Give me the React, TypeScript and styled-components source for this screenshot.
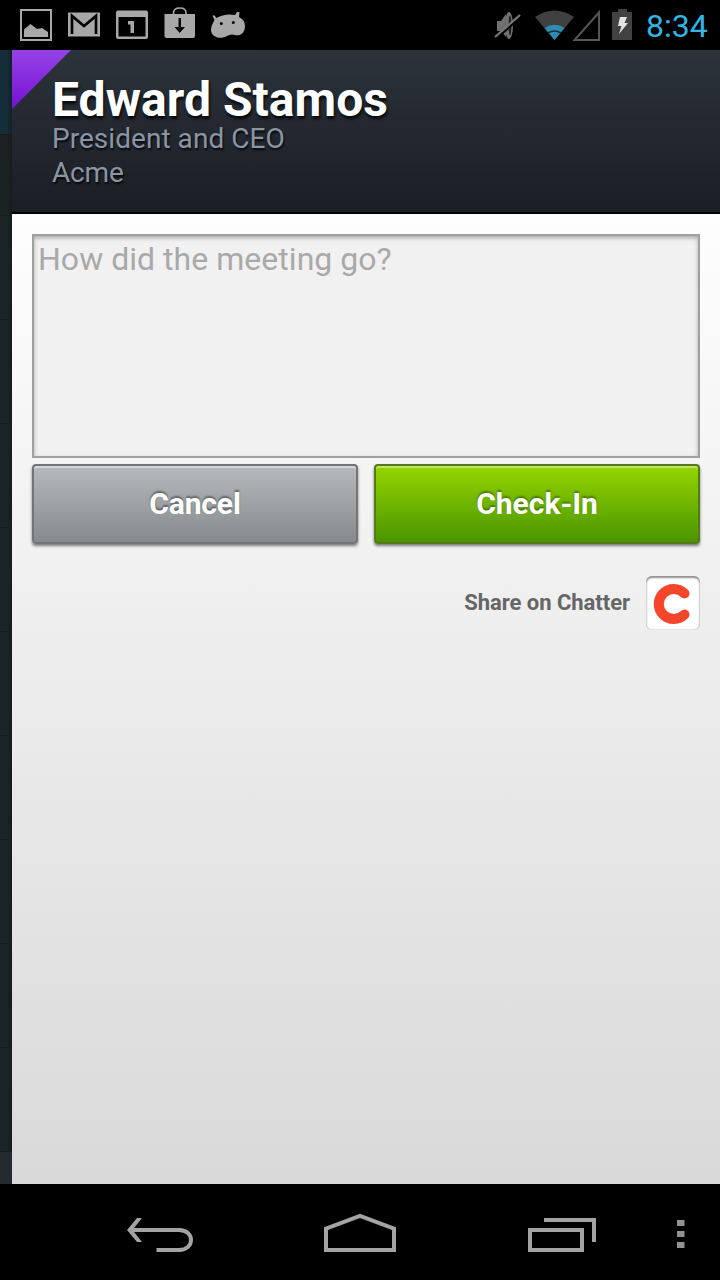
import React from "react";
import styled, { createGlobalStyle } from "styled-components";

const GlobalStyle = createGlobalStyle`
  * { box-sizing: border-box; }
  html, body { margin: 0; background: #000; }
  body { font-family: Roboto, "Liberation Sans", sans-serif; }
`;

const Screen = styled.div`
  width: 720px;
  height: 1280px;
  display: flex;
  flex-direction: column;
  background: #000;
  overflow: hidden;
`;

const StatusBar = styled.header`
  height: 50px;
  flex: none;
  display: flex;
  justify-content: space-between;
`;

const StatusRight = styled.div`
  display: flex;
`;

const Clock = styled.span`
  width: 74px;
  color: #33b5e5;
  font-size: 32px;
  line-height: 52px;
  white-space: nowrap;
`;

const Body = styled.div`
  height: 1134px;
  flex: none;
  display: flex;
`;

const Backdrop = styled.div`
  width: 12px;
  display: flex;
  flex-direction: column;
  background: #232a2d;
`;

const BackdropRow = styled.div<{ $height: number; $tone?: string }>`
  height: ${(p) => p.$height}px;
  flex: none;
  background: linear-gradient(90deg, transparent 60%, rgba(14, 20, 20, 0.5)), ${(p) => p.$tone ?? "#1b2426"};
  border-bottom: 1px solid #161d1e;
`;

const Panel = styled.main`
  width: 708px;
  display: flex;
  flex-direction: column;
`;

const ContactHeader = styled.section`
  position: relative;
  height: 164px;
  flex: none;
  padding: 28px 40px 0;
  background: linear-gradient(#2b333b, #22262e 58%, #1b1e23);
  border-bottom: 2px solid #000;
`;

const Ribbon = styled.svg`
  position: absolute;
  left: 0;
  top: 0;
`;

const Name = styled.h1`
  margin: 0;
  color: #fff;
  font-size: 48px;
  line-height: 44px;
  font-weight: 700;
  letter-spacing: 0.05px;
  text-shadow: 1px 3px 3px rgba(0, 0, 0, 0.8);
`;

const Detail = styled.p<{ $spacing?: number }>`
  margin: 0;
  color: #8b95a5;
  font-size: 28px;
  line-height: 34px;
  letter-spacing: ${(p) => p.$spacing ?? 0}px;
  text-shadow: 1px 2px 2px rgba(0, 0, 0, 0.8);
`;

const Content = styled.section`
  flex: 1;
  display: flex;
  flex-direction: column;
  padding: 20px 20px 0;
  background: linear-gradient(#fefefe, #f2f2f2 32%, #d9d9d9);
`;

const Notes = styled.textarea`
  display: block;
  width: 668px;
  height: 224px;
  flex: none;
  resize: none;
  margin: 0;
  padding: 4px 4px;
  border: 2px solid #a0a0a0;
  border-radius: 0;
  outline: 0;
  background: #f1f1f1;
  box-shadow: inset 0 2px 4px rgba(0, 0, 0, 0.3);
  font: 32px/38px Roboto, "Liberation Sans", sans-serif;
  letter-spacing: 0.03px;
  color: #333;
  &::placeholder { color: #a9a9a9; opacity: 1; }
`;

const Actions = styled.div`
  display: flex;
  gap: 16px;
  margin-top: 6px;
`;

const Button = styled.button<{ $primary?: boolean }>`
  flex: 1;
  height: 80px;
  padding: 0;
  border: 2px solid ${(p) => (p.$primary ? "#567a1b" : "#6f7578")};
  border-radius: 4px;
  background: ${(p) => (p.$primary ? "linear-gradient(#94d500, #4b9500)" : "linear-gradient(#b6babd, #858a8c)")};
  box-shadow: inset 0 2px 0 ${(p) => (p.$primary ? "#bfe566" : "#d4d8da")}, 0 2px 3px rgba(0, 0, 0, 0.5);
  color: #fff;
  font: 700 30px/36px Roboto, "Liberation Sans", sans-serif;
  letter-spacing: ${(p) => (p.$primary ? 0 : -0.15)}px;
  text-shadow: 0 -2px 2px ${(p) => (p.$primary ? "rgba(40, 80, 0, 0.6)" : "rgba(0, 0, 0, 0.4)")};
`;

const ShareRow = styled.div`
  display: flex;
  justify-content: flex-end;
  align-items: center;
  gap: 16px;
  margin-top: 32px;
`;

const ShareLabel = styled.span`
  color: #666;
  font-size: 22px;
  line-height: 26px;
  font-weight: 700;
  letter-spacing: -0.04px;
`;

const ChatterToggle = styled.div`
  width: 54px;
  height: 54px;
  border-radius: 6px;
  background: #fff;
  box-shadow: inset 0 2px 2px #909090, inset 0 0 2px #aaa;
`;

const NavBar = styled.nav`
  height: 96px;
  flex: none;
`;

function NotificationIcons() {
  return (
    <svg width="260" height="50" fill="#a8a8a8">
      <rect x="21" y="10" width="30" height="30" fill="none" stroke="#a8a8a8" strokeWidth="2" />
      <path d="M24 37V29.500L30.500 24L37 29L42 28L48 32V37Z" />
      <path d="M68 12.500H100V36.500H68Z" />
      <path d="M72 34V16L84 26L96 16V34" fill="none" stroke="#050505" strokeWidth="2.700" />
      <path d="M118 10.500H146Q148 10.500 148 12.500V37Q148 39 146 39H118Q116 39 116 37V12.500Q116 10.500 118 10.500ZM118.500 17V36.500H145.500V17Z" fillRule="evenodd" />
      <path d="M128 21H134V33H130.500V24.500H128Z" />
      <path d="M164.500 14H195V36Q195 38 193 38H166.500Q164.500 38 164.500 36Z" />
      <path d="M173.500 15V13Q173.500 8 180 8Q186 8 186 13V15" fill="none" stroke="#a8a8a8" strokeWidth="1.600" />
      <path d="M178.500 18H181V27H185L179.700 33L174.500 27H178.500Z" fill="#080808" />
      <path d="M214 15L216.500 18Q225 13 235 15L237 12L239.500 12L239 17Q245 20 245 26C245 33 240 36.500 235 35Q231 33.500 227 36C220 40 211 37 211 30C211 26 213 23 214.500 20L212.500 16Z" />
      <circle cx="221.300" cy="23.500" r="1.500" fill="#080808" />
      <circle cx="233.300" cy="22.500" r="1.500" fill="#080808" />
    </svg>
  );
}

function SystemIcons() {
  return (
    <svg width="166" height="50">
      <path d="M17 21H21L26 14V37L21 31H17Z" fill="#707070" />
      <ellipse cx="29" cy="25.500" rx="4" ry="13.500" fill="#707070" />
      <ellipse cx="30" cy="25.500" rx="1.400" ry="10" fill="#202020" />
      <path d="M17 38L41 17" stroke="#000" strokeWidth="2" />
      <path d="M15 37L40 15" stroke="#777" strokeWidth="2.200" />
      <path d="M74.500 40L55 17Q74.500 4 94 17Z" fill="#404040" />
      <path d="M74.500 40L64.500 28Q74.500 21.500 84.500 28Z" fill="#2b8db3" />
      <path d="M68 33Q74.500 29 81 33" fill="none" stroke="#17303a" strokeWidth="1.500" />
      <path d="M94.500 40H119V12.500Z" fill="none" stroke="#555" strokeWidth="2" />
      <path d="M132 12H138V9H147V12H152V40H132Z" fill="#424242" />
      <path d="M140 17H147L144.500 23H148L139 34L141.500 26H138Z" fill="#e4e4e4" />
    </svg>
  );
}

function ChatterLogo() {
  return (
    <svg width="54" height="54">
      <path d="M38.500 17.500A15 15 0 1 0 38.500 38.500" fill="none" stroke="#f5452a" strokeWidth="10" strokeLinecap="round" />
    </svg>
  );
}

function NavigationIcons() {
  return (
    <svg width="720" height="96" fill="none" stroke="#a3a3a3" strokeWidth="4">
      <path d="M156.500 66H179C195 66 195 46 179 46H130" />
      <path d="M137 34H142L132.500 46L142 58H137L127 46Z" fill="#a3a3a3" stroke="none" />
      <path d="M326 66V44.700L360 32L394 44.700V66Z" />
      <path d="M530 46H582V66H530ZM544 36H594V58" />
      <g fill="#929292" stroke="none">
        <rect x="677" y="36" width="7.500" height="6" />
        <rect x="677" y="47" width="7.500" height="6" />
        <rect x="677" y="58" width="7.500" height="6" />
      </g>
    </svg>
  );
}

const rows = [81, 104, 104, 104, 104, 104, 104, 104, 104, 104];

export default function App() {
  return (
    <Screen>
      <GlobalStyle />
      <StatusBar>
        <NotificationIcons />
        <StatusRight>
          <SystemIcons />
          <Clock>8:34</Clock>
        </StatusRight>
      </StatusBar>
      <Body>
        <Backdrop>
          <BackdropRow $height={85} $tone="#152c39" />
          {rows.map((height, i) => (
            <BackdropRow key={i} $height={height} $tone={i === 0 ? "#1b2322" : undefined} />
          ))}
        </Backdrop>
        <Panel>
          <ContactHeader>
            <Ribbon width="60" height="60">
              <defs>
                <linearGradient id="ribbon" x1="0" y1="0" x2="0" y2="1">
                  <stop offset="0" stopColor="#9642e5" />
                  <stop offset="1" stopColor="#7412d5" />
                </linearGradient>
              </defs>
              <path d="M0 0H59L0 59Z" fill="url(#ribbon)" />
            </Ribbon>
            <Name>Edward Stamos</Name>
            <Detail $spacing={0.04}>President and CEO</Detail>
            <Detail $spacing={-0.2}>Acme</Detail>
          </ContactHeader>
          <Content>
            <Notes placeholder="How did the meeting go?" />
            <Actions>
              <Button>Cancel</Button>
              <Button $primary>Check-In</Button>
            </Actions>
            <ShareRow>
              <ShareLabel>Share on Chatter</ShareLabel>
              <ChatterToggle>
                <ChatterLogo />
              </ChatterToggle>
            </ShareRow>
          </Content>
        </Panel>
      </Body>
      <NavBar>
        <NavigationIcons />
      </NavBar>
    </Screen>
  );
}
